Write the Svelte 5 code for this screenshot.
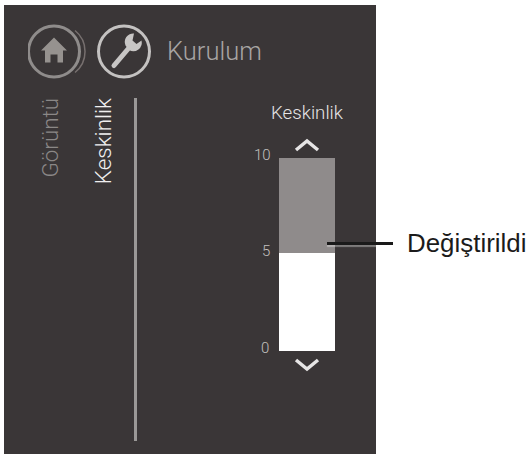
<script>
  const ticks = [
    { label: '10', cls: 'top' },
    { label: '5', cls: 'mid' },
    { label: '0', cls: 'low' }
  ];
</script>

<div class="page">
  <div class="panel">
    <header class="head">
      <div class="home-wrap">
        <svg class="ico" width="62" height="56" viewBox="0 0 62 56" aria-hidden="true">
          <circle cx="26" cy="28.500" r="25.500" fill="none" stroke="#8f8c8b" stroke-width="3"/>
          <path d="M47 7.500A27 27 0 0 1 47 49.500" fill="none" stroke="#77706f" stroke-width="1.500"/>
          <path d="M26 14.500 39 27.500H35V39.500H29.500V31.500H22.500V39.500H17V27.500H13Z" fill="#96928f"/>
        </svg>
      </div>
      <svg class="ico wrench" width="56" height="56" viewBox="0 0 56 56" aria-hidden="true">
        <circle cx="28" cy="28.500" r="25.500" fill="none" stroke="#c4c2c1" stroke-width="3"/>
        <path d="M18 42.500 32 26" stroke="#c8c6c5" stroke-width="5" stroke-linecap="round"/>
        <path d="M38 10.500A8.500 8.500 0 0 0 29.500 22.500L33 27A8.500 8.500 0 0 0 45.500 17.500L40.500 21 36.500 17.500Z" fill="#c8c6c5"/>
      </svg>
      <span class="title">Kurulum</span>
    </header>
    <div class="body">
      <nav class="tabs">
        <span class="tab dim">Görüntü</span>
        <span class="tab on">Keskinlik</span>
      </nav>
      <div class="rule"></div>
      <section class="slider">
        <div class="name">Keskinlik</div>
        <svg class="chev up" width="28" height="14" viewBox="0 0 28 14" aria-hidden="true"><path d="M3 12 14 3 25 12" fill="none" stroke="#e6e5e5" stroke-width="3.500"/></svg>
        <div class="track-row">
          <div class="scale">
            {#each ticks as t}
              <span class="tick {t.cls}">{t.label}</span>
            {/each}
          </div>
          <div class="track">
            <div class="upper"></div>
            <div class="lower"></div>
          </div>
        </div>
        <svg class="chev down" width="28" height="14" viewBox="0 0 28 14" aria-hidden="true"><path d="M3 2 14 11 25 2" fill="none" stroke="#e6e5e5" stroke-width="3.500"/></svg>
      </section>
    </div>
  </div>
  <div class="callout">
    <span class="lead"></span>
    <span class="callout-text">Değiştirildi</span>
  </div>
</div>

<style>
  :global(body) {
    margin: 0;
    background: #fff;
  }
  .page {
    position: relative;
    width: 529px;
    height: 454px;
    padding: 5px 0 0 4px;
    box-sizing: border-box;
    overflow: hidden;
  }
  .panel {
    width: 372px;
    height: 449px;
    background: #3a3637;
    box-sizing: border-box;
    padding: 18px 0 0 21px;
    font-family: Roboto, "Liberation Sans", sans-serif;
    display: flex;
    flex-direction: column;
  }
  .head {
    display: flex;
    align-items: center;
    height: 56px;
  }
  .home-wrap {
    width: 71px;
    height: 56px;
    padding-left: 2.500px;
    box-sizing: border-box;
  }
  .ico {
    display: block;
  }
  .title {
    margin-left: 15px;
    font-size: 25.500px;
    font-weight: 300;
    color: #a8a5a4;
  }
  .body {
    display: flex;
    margin-top: 19px;
    flex: 1;
    min-height: 0;
  }
  .tabs {
    display: flex;
    width: 90px;
    padding-left: 15px;
    gap: 33px;
    box-sizing: border-box;
  }
  .tab {
    writing-mode: vertical-rl;
    transform: rotate(180deg);
    font-size: 22.400px;
    font-weight: 300;
    line-height: 20px;
    height: fit-content;
  }
  .dim {
    color: #8b8887;
  }
  .on {
    color: #f0efef;
  }
  .rule {
    width: 3px;
    height: 343px;
    margin-left: 19px;
    background: #9a9897;
  }
  .slider {
    margin-left: 125px;
    width: 90px;
    display: flex;
    flex-direction: column;
    align-items: center;
    color: #e6e5e5;
  }
  .name {
    margin-top: 5px;
    font-size: 18.700px;
    font-weight: 300;
    line-height: 20px;
    white-space: nowrap;
  }
  .chev {
    display: block;
  }
  .up {
    margin-top: 15px;
  }
  .track-row {
    display: flex;
    margin-top: 6px;
    margin-left: -25px;
  }
  .scale {
    width: 25px;
    height: 193px;
    display: flex;
    flex-direction: column;
    font-size: 15px;
    font-weight: 300;
    line-height: 16px;
    color: #c2c0bf;
  }
  .tick {
    display: block;
  }
  .top {
    margin-top: -11px;
  }
  .mid {
    margin-top: 80px;
    margin-left: 8px;
  }
  .low {
    margin-top: 81px;
    margin-left: 7px;
  }
  .track {
    width: 56px;
    height: 193px;
    display: flex;
    flex-direction: column;
  }
  .upper {
    height: 95px;
    background: #8f8b8b;
  }
  .lower {
    flex: 1;
    background: #fff;
  }
  .down {
    margin-top: 7px;
  }
  .callout {
    position: absolute;
    left: 327px;
    top: 231px;
    display: flex;
    align-items: center;
    height: 24px;
  }
  .lead {
    display: block;
    width: 66px;
    height: 3px;
    background: #1a1a1a;
    box-shadow: 0 2px 1px rgba(255, 255, 255, 0.35);
  }
  .callout-text {
    margin-left: 14px;
    font-family: "Liberation Sans", Arial, sans-serif;
    font-size: 25.900px;
    color: #1b1b1b;
    white-space: nowrap;
  }
</style>
